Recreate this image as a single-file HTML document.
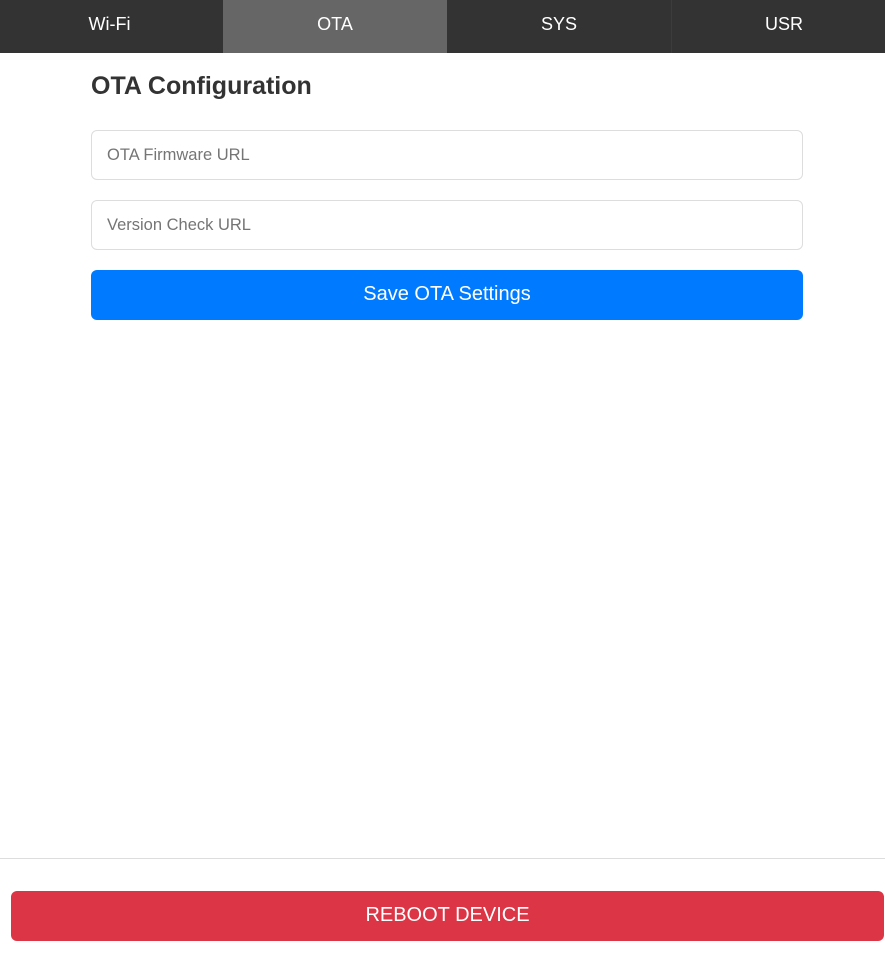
<!DOCTYPE html>
<html><head><meta charset="utf-8"><style>
*{box-sizing:border-box;margin:0;padding:0}
body{width:885px;height:960px;background:#fff;font-family:"Liberation Sans",Arial,sans-serif;position:relative;overflow:hidden}
.tabs{position:absolute;left:0;top:0;width:885px;height:53px;background:#333}
.tab{position:absolute;top:0;height:53px;line-height:49px;text-align:center;color:#fff;font-size:18px}
.sep{position:absolute;top:0;width:1px;height:53px;background:#3c3c3c}
h2{position:absolute;left:91px;top:72px;font-size:25px;font-weight:bold;color:#333}
.inp{position:absolute;left:91px;width:712px;height:50px;border:1px solid #ddd;border-radius:6px;padding-left:15px;line-height:48px;font-size:16.5px;color:#757575}
.btn{position:absolute;left:91px;top:270px;width:712px;height:50px;background:#007bff;border-radius:6px;color:#fff;font-size:20px;text-align:center;line-height:49px}
.line{position:absolute;left:0;top:858px;width:885px;height:1px;background:#ddd}
.reboot{position:absolute;left:11px;top:891px;width:873px;height:50px;background:#dc3545;border-radius:6px;color:#fff;font-size:20px;text-align:center;line-height:49px}
</style></head><body>
<div class="tabs">
<div class="tab" style="left:0;width:219px">Wi-Fi</div>
<div class="tab" style="left:223px;width:224px;background:#666">OTA</div>
<div class="tab" style="left:447px;width:224px">SYS</div>
<div class="sep" style="left:671px"></div>
<div class="tab" style="left:672px;width:224px">USR</div>
</div>
<h2>OTA Configuration</h2>
<div class="inp" style="top:130px">OTA Firmware URL</div>
<div class="inp" style="top:200px">Version Check URL</div>
<div class="btn">Save OTA Settings</div>
<div class="line"></div>
<div class="reboot">REBOOT DEVICE</div>
</body></html>
